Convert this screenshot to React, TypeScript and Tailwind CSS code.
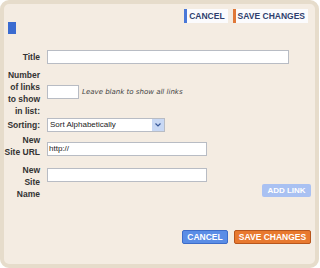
import React from "react";

const label = "text-right text-[8.5px] leading-[12px] font-bold text-[#333]";
const input = "h-[14px] border border-[#b8bcc4] bg-white";

function TopButton({ text, bar }: { text: string; bar: string }) {
  return (
    <div className="flex h-[14px] items-center bg-[#fbfbfd] pr-[3px] text-[8.5px] font-bold text-[#2f3f6e]">
      <span className={`mr-[2px] h-full w-[3px] ${bar}`} />
      {text}
    </div>
  );
}

export default function App() {
  return (
    <div
      className="h-[268px] w-[319px] rounded-[9px] border-4 border-[#e6dccb] bg-[#f4ece2]"
      style={{ fontFamily: '"Liberation Sans", Arial, sans-serif' }}
    >
      <div className="flex justify-end gap-[5px] pr-[7px] pt-[5px]">
        <TopButton text="CANCEL" bar="bg-[#4a78d8]" />
        <TopButton text="SAVE CHANGES" bar="bg-[#e07838]" />
      </div>

      <div className="ml-[4px] mt-[-1px] h-[12px] w-[8px] bg-[#3a6bd0]" />

      <div className="mt-[16px] flex flex-col pr-[4px]">
        <div className="flex items-start gap-[7px]">
          <div className={`${label} mt-[1px] w-[36px]`}>Title</div>
          <div className={`${input} w-[242px]`} />
        </div>

        <div className="mt-[5px] flex items-start gap-[7px]">
          <div className={`${label} w-[36px]`}>
            Number
            <br />
            of links
            <br />
            to show
            <br />
            in list:
          </div>
          <div className="mt-[16px] flex items-center gap-[3px]">
            <div className={`${input} w-[32px]`} />
            <span
              className="text-[7px] italic text-[#444]"
              style={{ fontFamily: '"DejaVu Sans", Verdana, sans-serif' }}
            >
              Leave blank to show all links
            </span>
          </div>
        </div>

        <div className="mt-[1px] flex items-start gap-[7px]">
          <div className={`${label} mt-[1px] w-[36px]`}>Sorting:</div>
          <div className={`${input} flex w-[118px] items-center justify-between`}>
            <span className="pl-[2px] text-[8px] leading-none text-[#222]">
              Sort Alphabetically
            </span>
            <span className="flex h-full w-[12px] items-center justify-center bg-[#c8d8f4]">
              <svg width="6" height="4" viewBox="0 0 6 4">
                <path d="M0.5 0.5 L3 3 L5.5 0.5" fill="none" stroke="#3a5a9a" strokeWidth="1.2" />
              </svg>
            </span>
          </div>
        </div>

        <div className="mt-[2px] flex items-start gap-[7px]">
          <div className={`${label} w-[36px]`}>
            New
            <br />
            Site URL
          </div>
          <div className={`${input} mt-[8px] flex w-[160px] items-center`}>
            <span className="pl-[1px] text-[8px] leading-none text-[#222]">http://</span>
          </div>
        </div>

        <div className="mt-[6px] flex items-start gap-[7px]">
          <div className={`${label} w-[36px]`}>
            New
            <br />
            Site
            <br />
            Name
          </div>
          <div className={`${input} mt-[4px] w-[160px]`} />
          <div className="ml-auto mt-[20px] flex h-[13px] w-[49px] items-center justify-center rounded-[2px] bg-[#a9c1f2] text-[8px] font-bold text-white">
            ADD LINK
          </div>
        </div>
      </div>

      <div className="mt-[30px] flex justify-end gap-[6px] pr-[4px]">
        <div className="flex h-[14px] w-[46px] items-center justify-center rounded-[2px] border border-[#3d6cc8] bg-[#5a8de6] text-[8.5px] font-bold text-white">
          CANCEL
        </div>
        <div className="flex h-[14px] w-[77px] items-center justify-center rounded-[2px] border border-[#b8561c] bg-[#e8792f] text-[8.5px] font-bold text-white">
          SAVE CHANGES
        </div>
      </div>
    </div>
  );
}
